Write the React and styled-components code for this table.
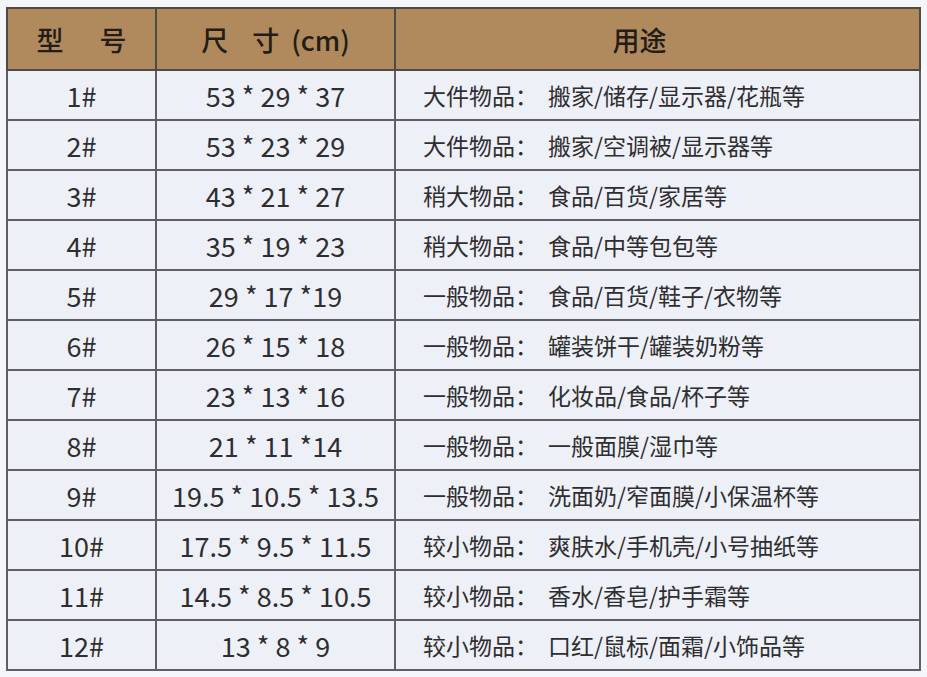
import React from "react";
import styled, { createGlobalStyle } from "styled-components";

const GlobalStyle = createGlobalStyle`
  html, body {
    margin: 0;
    padding: 0;
    background: #f5f6f9;
  }
  body {
    font-family: "Noto Sans CJK SC", "Noto Sans", sans-serif;
  }
`;

const Page = styled.div`
  padding: 7px 6px 0 6px;
  width: 915px;
`;

const Table = styled.table`
  width: 915px;
  border-collapse: collapse;
  table-layout: fixed;
  border: 2px solid #5c5c60;
`;

const HeadCell = styled.th`
  height: 60px;
  padding: 0 ${(p) => p.$padRight || 0}px 0 0;
  background: #b08a5d;
  color: #231d17;
  font-size: 27px;
  font-weight: 500;
  text-align: center;
  border: 2px solid #4e4a46;
  white-space: nowrap;
`;

const HeadPart = styled.span`
  margin-left: ${(p) => p.$gap || 0}px;
`;

const Row = styled.tr`
  height: 50px;
  background: #eef0f7;
`;

const Cell = styled.td`
  padding: 0;
  padding-left: ${(p) => (p.$left ? "27px" : "0")};
  color: #2e2e30;
  font-size: ${(p) => (p.$left ? "23px" : "27px")};
  text-align: ${(p) => (p.$left ? "left" : "center")};
  border: 2px solid #606064;
  white-space: nowrap;
  line-height: 1;
`;

const UseText = styled.span`
  margin-left: 10px;
`;

const rows = [
  ["1#", "53 * 29 * 37", "大件物品：", "搬家/储存/显示器/花瓶等"],
  ["2#", "53 * 23 * 29", "大件物品：", "搬家/空调被/显示器等"],
  ["3#", "43 * 21 * 27", "稍大物品：", "食品/百货/家居等"],
  ["4#", "35 * 19 * 23", "稍大物品：", "食品/中等包包等"],
  ["5#", "29 * 17 *19", "一般物品：", "食品/百货/鞋子/衣物等"],
  ["6#", "26 * 15 * 18", "一般物品：", "罐装饼干/罐装奶粉等"],
  ["7#", "23 * 13 * 16", "一般物品：", "化妆品/食品/杯子等"],
  ["8#", "21 * 11 *14", "一般物品：", "一般面膜/湿巾等"],
  ["9#", "19.5 * 10.5 * 13.5", "一般物品：", "洗面奶/窄面膜/小保温杯等"],
  ["10#", "17.5 * 9.5 * 11.5", "较小物品：", "爽肤水/手机壳/小号抽纸等"],
  ["11#", "14.5 * 8.5 * 10.5", "较小物品：", "香水/香皂/护手霜等"],
  ["12#", "13 * 8 * 9", "较小物品：", "口红/鼠标/面霜/小饰品等"],
];

export default function App() {
  return (
    <>
      <GlobalStyle />
      <Page>
        <Table>
          <colgroup>
            <col style={{ width: 149 }} />
            <col style={{ width: 239 }} />
            <col />
          </colgroup>
          <thead>
            <tr>
              <HeadCell>
                型<HeadPart $gap={36}>号</HeadPart>
              </HeadCell>
              <HeadCell>
                尺<HeadPart $gap={24}>寸</HeadPart>
                <HeadPart $gap={12}>(cm)</HeadPart>
              </HeadCell>
              <HeadCell $padRight={36}>用途</HeadCell>
            </tr>
          </thead>
          <tbody>
            {rows.map(([no, size, kind, use]) => (
              <Row key={no}>
                <Cell>{no}</Cell>
                <Cell>{size}</Cell>
                <Cell $left>
                  {kind}
                  <UseText>{use}</UseText>
                </Cell>
              </Row>
            ))}
          </tbody>
        </Table>
      </Page>
    </>
  );
}
